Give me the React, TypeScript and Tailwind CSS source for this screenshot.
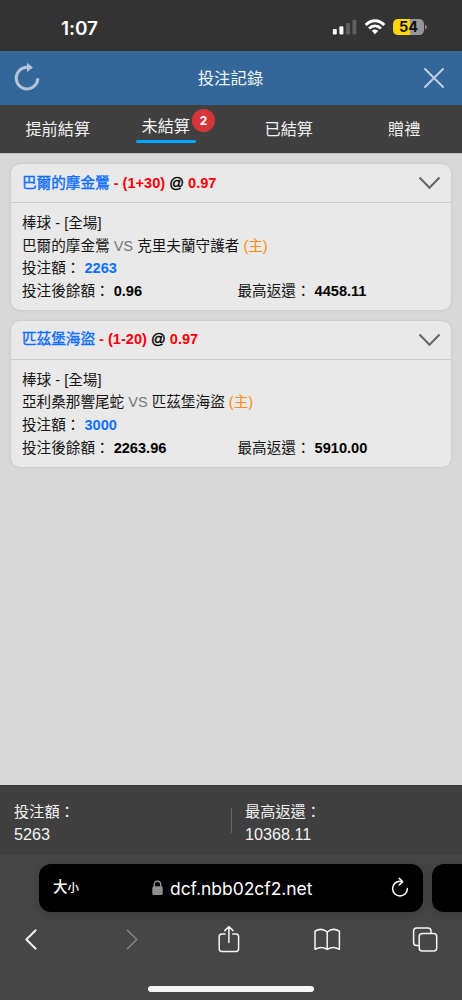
import React from "react";

type Bet = {
  team: string;
  handicap: string;
  odds: string;
  away: string;
  home: string;
  stake: string;
  balance: string;
  payout: string;
};

const bets: Bet[] = [
  { team: "巴爾的摩金鶯", handicap: "(1+30)", odds: "0.97", away: "巴爾的摩金鶯", home: "克里夫蘭守護者", stake: "2263", balance: "0.96", payout: "4458.11" },
  { team: "匹茲堡海盜", handicap: "(1-20)", odds: "0.97", away: "亞利桑那響尾蛇", home: "匹茲堡海盜", stake: "3000", balance: "2263.96", payout: "5910.00" },
];

function StatusBar() {
  return (
    <div className="flex h-[51px] shrink-0 items-start justify-between bg-[#333333] pt-[17px] pr-[34px] pl-[61px]">
      <span className="pt-px font-['Inter',sans-serif] text-[19px] leading-[22px] font-semibold tracking-[-0.1px] text-white">1:07</span>
      <svg width="96" height="20" viewBox="332 17 96 20">
        <rect x="332.8" y="29" width="4" height="5.6" rx="1" fill="#fff" />
        <rect x="339.4" y="26.2" width="4" height="8.4" rx="1" fill="#fff" />
        <rect x="346" y="23" width="4" height="11.6" rx="1" fill="#5e5e5e" />
        <rect x="352.4" y="19.8" width="4" height="14.8" rx="1" fill="#5e5e5e" />
        <g fill="none" stroke="#fff" strokeWidth="3">
          <path d="M365.7 25.1 C371 19.4 379 19.4 384.3 25.1" />
          <path d="M369.1 28.5 C372.6 25 377.4 25 380.9 28.5" />
        </g>
        <path d="M371.8 30.8 Q375 28.3 378.2 30.8 L375 34.3 Z" fill="#fff" />
        <path d="M398.5 19 H410 V35 H398.5 Q393 35 393 29.5 V24.5 Q393 19 398.5 19 Z" fill="#ffd60a" />
        <path d="M410 19 H418.5 Q424 19 424 24.5 V29.5 Q424 35 418.5 35 H410 Z" fill="#989898" />
        <path d="M425.2 24.5 Q426.8 25 426.8 27 Q426.8 29 425.2 29.5 Z" fill="#989898" />
        <text x="408.5" y="32.2" textAnchor="middle" fontFamily="Inter, sans-serif" fontSize="14.5" fontWeight="700" fill="#111">54</text>
      </svg>
    </div>
  );
}

function TitleBar() {
  return (
    <header className="flex h-[54px] shrink-0 items-center justify-between bg-[#336699] pr-[17px] pl-[13px]">
      <svg className="mb-[2px]" width="28" height="30" viewBox="13 62 28 30">
        <path d="M27 67.3 A10.8 10.8 0 1 0 37.8 78.2" fill="none" stroke="#b3c5d8" strokeWidth="3" />
        <path d="M27 62.7 L33 67.5 L27 72 Z" fill="#b3c5d8" />
      </svg>
      <h1 className="pr-[3px] text-[16.4px] leading-6 text-[#f1f4f7]">投注記錄</h1>
      <svg width="22" height="22" viewBox="0 0 22 22">
        <path d="M2 2 L20 20 M20 2 L2 20" stroke="#c2d0df" strokeWidth="2" strokeLinecap="round" />
      </svg>
    </header>
  );
}

function Tabs() {
  return (
    <nav className="grid h-[48px] shrink-0 grid-cols-4 bg-[#404040] text-[16.2px] leading-6 text-[#f2f2f2]">
      <span className="pt-[12px] text-center">提前結算</span>
      <span className="relative flex flex-col items-center pt-[9px] pr-[15px]">
        <span>未結算</span>
        <span className="mt-[2px] h-[3px] w-[60px] rounded-full bg-[#00a6ff]" />
        <span className="absolute top-[4px] left-[76.5px] flex size-[23px] items-center justify-center rounded-full bg-[#d53639] font-['Inter',sans-serif] text-[12px] font-bold text-white">2</span>
      </span>
      <span className="pt-[12px] text-center">已結算</span>
      <span className="pt-[12px] text-center">贈禮</span>
    </nav>
  );
}

function BetCard({ bet }: { bet: Bet }) {
  return (
    <article className="h-[146px] rounded-[9px] bg-[#e9e9e9] text-[14.6px] leading-[22.7px] text-[#151515] shadow-[0_0_3px_#bdbdbd]">
      <div className="flex h-[39px] items-center justify-between border-b border-[#cccccc] pr-[10px] pl-[11px]">
        <span className="whitespace-pre font-bold text-[#fb0007]">
          <span className="font-normal text-[#0f6fff] [-webkit-text-stroke:0.4px_#0f6fff]">{bet.team}</span>
          {" - " + bet.handicap + " "}
          <span className="font-normal text-black [-webkit-text-stroke:0.4px_#000]">@</span>
          {" " + bet.odds}
        </span>
        <svg width="23" height="14" viewBox="0 0 23 14">
          <path d="M1.5 1.5 L11.5 11.7 L21.5 1.5" fill="none" stroke="#666" strokeWidth="2" />
        </svg>
      </div>
      <div className="pt-[9px] pl-[11px] whitespace-pre">
        <p>棒球 - [全場]</p>
        <p>
          {bet.away} <span className="text-[#777]">VS</span> {bet.home} <span className="text-[#ff8a0d]">(主)</span>
        </p>
        <p>
          投注額： <b className="text-[#0f6fff]">{bet.stake}</b>
        </p>
        <div className="grid grid-cols-[215.5px_1fr]">
          <p>投注後餘額： <b className="text-black">{bet.balance}</b></p>
          <p>最高返還： <b className="text-black">{bet.payout}</b></p>
        </div>
      </div>
    </article>
  );
}

function Totals() {
  return (
    <section className="flex h-[70px] shrink-0 items-center border-t border-[#393939] bg-[#404040] pl-[14px] text-[15.2px] leading-[22.5px] text-[#f2f2f2]">
      <div className="w-[217px] pt-[5px]">
        <p>投注額：</p>
        <p className="text-[16.2px]">5263</p>
      </div>
      <div className="h-[25px] w-px bg-[#686868]" />
      <div className="pt-[5px] pl-[13px]">
        <p>最高返還：</p>
        <p className="text-[16.2px]">10368.11</p>
      </div>
    </section>
  );
}

function BrowserChrome() {
  return (
    <footer className="flex h-[145px] shrink-0 flex-col overflow-hidden bg-[#464646]">
      <div className="flex gap-[9px] pt-[9px] pl-[39px]">
        <div className="flex h-[48px] w-[384px] shrink-0 items-center rounded-[12px] bg-black pr-[14px] pl-[14px] text-white shadow-[0_2px_8px_#3b3b3b]">
          <span className="flex w-[99px] items-baseline font-medium">
            <span className="text-[14.5px]">大</span>
            <span className="text-[11.5px]">小</span>
          </span>
          <svg width="11" height="16" viewBox="0 0 11 16">
            <path d="M2.3 7 V4.5 Q2.3 1.2 5.5 1.2 Q8.7 1.2 8.7 4.5 V7" fill="none" stroke="#8e8e93" strokeWidth="1.4" />
            <rect x="0.3" y="6.3" width="10.4" height="8.7" rx="1.6" fill="#8e8e93" />
          </svg>
          <span className="ml-[7px] pt-px font-['Inter',sans-serif] text-[17.5px] leading-6 tracking-[-0.05px]">dcf.nbb02cf2.net</span>
          <svg className="ml-auto" width="18" height="22" viewBox="0 0 18 22">
            <g fill="none" stroke="#fff" strokeWidth="1.5" strokeLinecap="round" strokeLinejoin="round">
              <path d="M11 4.5 Q10 4.2 9 4.2 A7.4 7.4 0 1 0 16.4 11.6" />
              <path d="M8.2 1.2 L11.6 4.6 L8.2 8" />
            </g>
          </svg>
        </div>
        <div className="h-[48px] w-[60px] shrink-0 rounded-l-[12px] bg-black shadow-[0_2px_8px_#3b3b3b]" />
      </div>
      <svg className="mt-[9px] shrink-0" width="462" height="40" viewBox="0 921 462 40" fill="none" stroke="#f5f5f5" strokeWidth="1.5" strokeLinecap="round" strokeLinejoin="round">
        <path d="M35.7 930.3 L26.3 939.5 L35.7 948.7" strokeWidth="1.9" />
        <path d="M127.3 930.3 L136.8 939.5 L127.3 948.7" stroke="#858585" />
        <path d="M225 934 H221.8 Q219.2 934 219.2 936.6 V948.8 Q219.2 951.4 221.8 951.4 H236 Q238.6 951.4 238.6 948.8 V936.6 Q238.6 934 236 934 H232.8 M228.9 942.5 V926.5 M224.8 930.6 L228.9 926.5 L233 930.6" />
        <path d="M327.2 932 Q321.5 927.2 315 931.2 V949.3 Q321.5 945.5 327.2 949.3 Q333 945.5 339.4 949.3 V931.2 Q333 927.2 327.2 932 V949.3" />
        <path d="M418.5 945.5 H416.7 Q413.6 945.5 413.6 942.4 V931.2 Q413.6 928.1 416.7 928.1 H427.9 Q431 928.1 431 931.2 V933.3" />
        <rect x="419.2" y="933.5" width="17.5" height="17.5" rx="3" />
      </svg>
      <div className="mx-auto mt-[25px] h-[6px] w-[166px] shrink-0 rounded-full bg-[#f5f5f5]" />
    </footer>
  );
}

export default function App() {
  return (
    <div className="flex h-[1000px] w-[462px] flex-col overflow-hidden bg-[#d8d8d8] font-['Liberation_Sans','Noto_Sans_CJK_TC',sans-serif]" lang="zh-Hant">
      <StatusBar />
      <TitleBar />
      <Tabs />
      <main className="flex grow flex-col gap-[10.5px] border-t border-[#bcbcbc] px-[11px] pt-[10px]">
        {bets.map((bet) => (
          <BetCard key={bet.team} bet={bet} />
        ))}
      </main>
      <Totals />
      <BrowserChrome />
    </div>
  );
}
